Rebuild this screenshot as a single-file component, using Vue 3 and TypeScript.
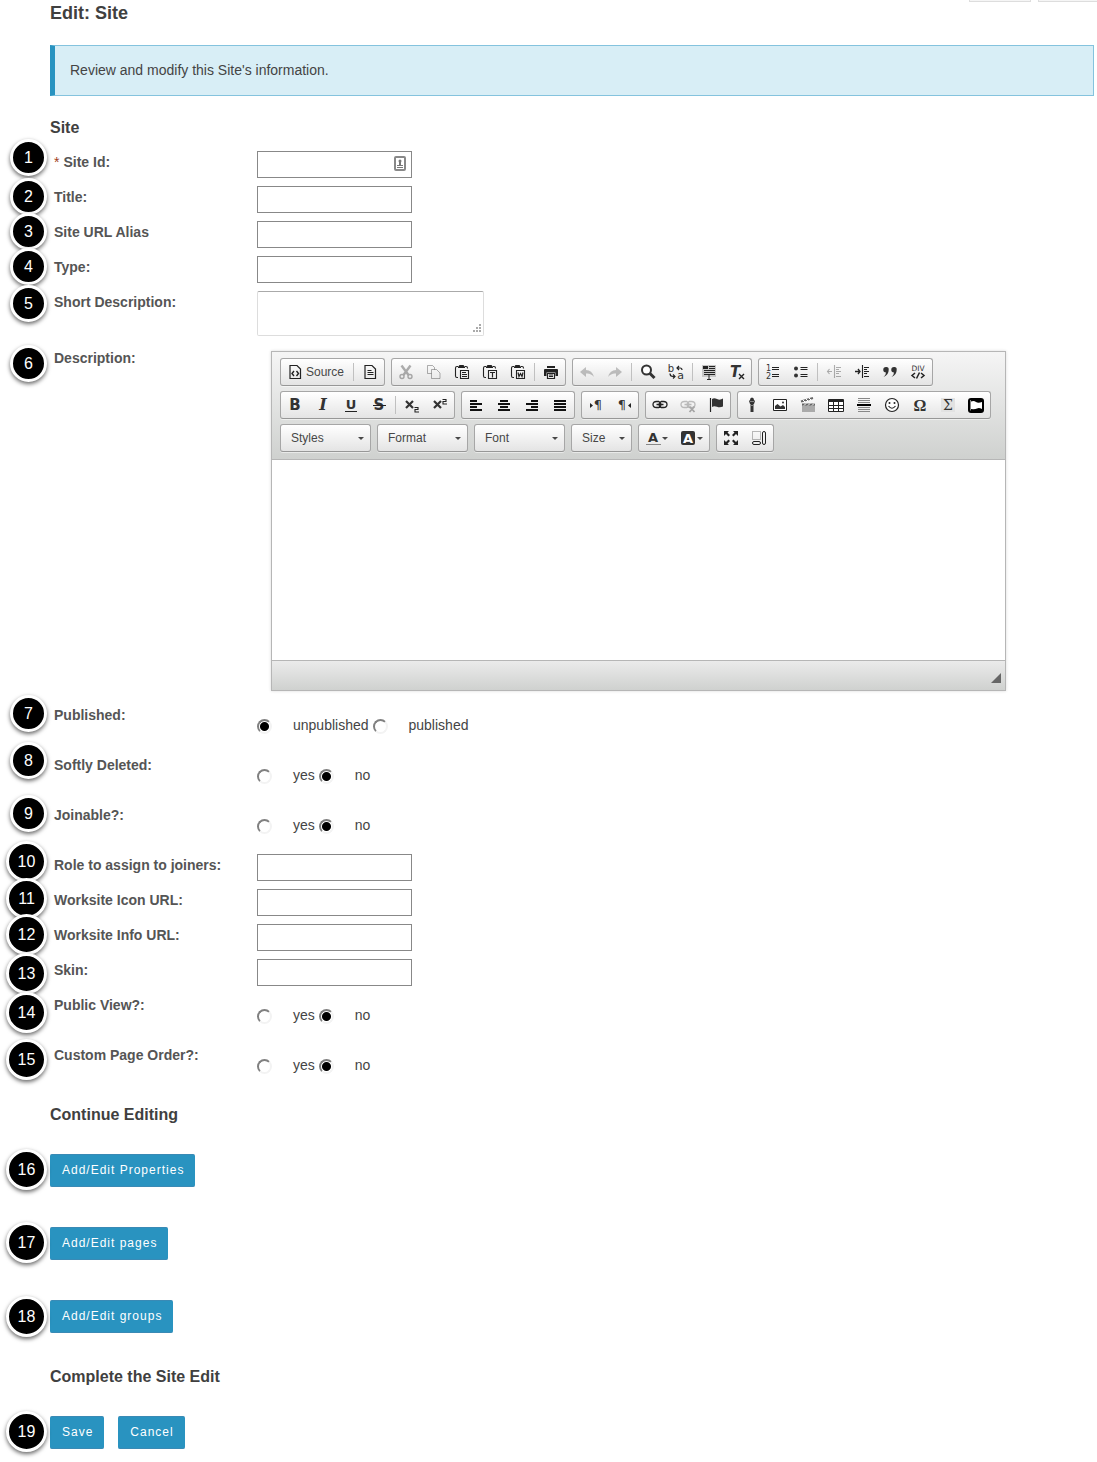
<script setup lang="ts">
import { reactive, ref } from 'vue'

type Field =
  | { kind: 'text'; id: string; label: string; required?: boolean }
  | { kind: 'area'; id: string; label: string }
  | { kind: 'editor'; id: string; label: string }
  | { kind: 'radio'; id: string; label: string; options: string[] }

const fields: Field[] = [
  { kind: 'text', id: 'site-id', label: 'Site Id:', required: true },
  { kind: 'text', id: 'title', label: 'Title:' },
  { kind: 'text', id: 'alias', label: 'Site URL Alias' },
  { kind: 'text', id: 'type', label: 'Type:' },
  { kind: 'area', id: 'short-description', label: 'Short Description:' },
  { kind: 'editor', id: 'description', label: 'Description:' },
  { kind: 'radio', id: 'published', label: 'Published:', options: ['unpublished', 'published'] },
  { kind: 'radio', id: 'softly-deleted', label: 'Softly Deleted:', options: ['yes', 'no'] },
  { kind: 'radio', id: 'joinable', label: 'Joinable?:', options: ['yes', 'no'] },
  { kind: 'text', id: 'joiner-role', label: 'Role to assign to joiners:' },
  { kind: 'text', id: 'icon-url', label: 'Worksite Icon URL:' },
  { kind: 'text', id: 'info-url', label: 'Worksite Info URL:' },
  { kind: 'text', id: 'skin', label: 'Skin:' },
  { kind: 'radio', id: 'public-view', label: 'Public View?:', options: ['yes', 'no'] },
  { kind: 'radio', id: 'page-order', label: 'Custom Page Order?:', options: ['yes', 'no'] },
]

const values = reactive<Record<string, string>>({
  published: 'unpublished',
  'softly-deleted': 'no',
  joinable: 'no',
  'public-view': 'no',
  'page-order': 'no',
})
const description = ref('')

// Vertical place of each numbered callout, in order
const pins: number[] = [
  139, 178, 213, 248, 285, 345, 695, 742, 795, 841, 878, 914, 953, 992, 1039, 1149, 1222, 1296, 1411,
]

interface Tool {
  icon?: string
  name?: string
  label?: string
  off?: boolean
  sep?: boolean
  menu?: boolean
  combo?: string
  narrow?: boolean
}
const sep: Tool = { sep: true }
const t = (icon: string, name: string, off = false): Tool => ({ icon, name, off })

const toolbar: Tool[][][] = [
  [
    [{ icon: 'source', name: 'Source', label: 'Source' }, sep, t('page', 'New Page')],
    [t('cut', 'Cut', true), t('copy', 'Copy', true), t('paste', 'Paste'), t('pasteText', 'Paste as plain text'), t('pasteWord', 'Paste from Word'), sep, t('print', 'Print')],
    [t('undo', 'Undo', true), t('redo', 'Redo', true), sep, t('find', 'Find'), t('replace', 'Replace'), sep, t('selectAll', 'Select All'), t('clear', 'Remove Format')],
    [t('numbers', 'Numbered List'), t('bullets', 'Bulleted List'), sep, t('outdent', 'Decrease Indent', true), t('indent', 'Increase Indent'), t('quote', 'Block Quote'), t('div', 'Create Div')],
  ],
  [
    [t('bold', 'Bold'), t('italic', 'Italic'), t('underline', 'Underline'), t('strike', 'Strike Through'), sep, t('sub', 'Subscript'), t('sup', 'Superscript')],
    [t('left', 'Align Left'), t('center', 'Center'), t('right', 'Align Right'), t('justify', 'Justify')],
    [t('ltr', 'Left to right'), t('rtl', 'Right to left')],
    [t('link', 'Link'), t('unlink', 'Unlink', true), t('flag', 'Anchor')],
    [t('mic', 'Record Audio'), t('image', 'Image'), t('movie', 'Movie'), t('table', 'Table'), t('rule', 'Horizontal Line'), t('smile', 'Smiley'), t('omega', 'Special Character'), t('sigma', 'Formula'), t('frame', 'Embed')],
  ],
  [
    [{ combo: 'Styles' }],
    [{ combo: 'Format' }],
    [{ combo: 'Font' }],
    [{ combo: 'Size', narrow: true }],
    [{ icon: 'color', name: 'Text Color', menu: true }, { icon: 'bgcolor', name: 'Background Color', menu: true }],
    [t('maximize', 'Maximize'), t('blocks', 'Show Blocks')],
  ],
]

const line = (d: string, w = 1, c = '#222') => `<path d="${d}" fill="none" stroke="${c}" stroke-width="${w}"/>`
const fill = (d: string, c = '#222') => `<path d="${d}" fill="${c}"/>`
const txt = (s: string, x: number, y: number, size: number, extra = '') =>
  `<text x="${x}" y="${y}" font-size="${size}" text-anchor="middle" font-family="DejaVu Sans, sans-serif" fill="#333" ${extra}>${s}</text>`

const sheet = line('M3 1.500h7l3.500 3.500v9.500h-10.500z', 1.2)
const clipboard =
  line('M4 2.500h-1q-1.500 0-1.500 1.500v8q0 1.500 1.500 1.500h1M11 2.500h1q1.500 0 1.500 1.500v.5', 1.1) +
  fill('M4 3l1.500-2h4L11 3v1H4z') +
  line('M6.500 6.500h8v8h-8z', 1.1)
const chain = (c: string) =>
  line('M7 4.500H4.500q-3.500 0-3.500 3t3.500 3H7M9 4.500h2.500q3.500 0 3.500 3t-3.500 3H9M4.500 7.500h7M7 4.500q2 1 2 3t-2 3M9 4.500q-2 1-2 3t2 3', 1.3, c)
const cross = (y: number) => line(`M2 ${y}l7 7M9 ${y}l-7 7`, 2.2, '#333')

const icons: Record<string, string> = {
  source: sheet + line('M7 7l-2 2.500 2 2.500M9.500 7l2 2.500-2 2.500', 1.4),
  page: sheet + line('M5.500 6.500h4M5.500 8.500h6M5.500 10.500h6', 1.2),
  cut: line('M3.500 1.500l7 9.500M12.500 1.500L5.500 11', 2.4) + line('M2 12.500a2 2 0 1 0 4 0a2 2 0 1 0-4 0M10 12.500a2 2 0 1 0 4 0a2 2 0 1 0-4 0', 1.4),
  copy: line('M5.500 9.500h-4v-8h5l2 2v2M5.500 5.500h5l3.500 3.500v5.500h-8.500z'),
  paste: clipboard + line('M8 8.500h4M8 10.500h5M8 12.500h5'),
  pasteText: clipboard + line('M8 8.500h5M10.500 8.500v5', 1.2),
  pasteWord: clipboard + line('M8 8.500l1 4 1.500-3 1.500 3 1-4', 1.2),
  print: fill('M4 2h8v2H4zM2 5h12q1 0 1 1v6h-2.500V8.500h-9V12H1V6q0-1 1-1z') + line('M4.500 9.500h7v5h-7z', 1.2) + line('M6 11h4M6 12.500h4'),
  undo: fill('M1 8l6-5v3q6 0 8 7q-3-4-8-3.500V13z', '#555'),
  redo: fill('M15 8L9 3v3Q3 6 1 13q3-4 8-3.500V13z', '#555'),
  find: '<circle cx="6.500" cy="6" r="4.500" fill="#fff" stroke="#333" stroke-width="2"/>' + line('M9.500 9l5 5', 3, '#333'),
  replace:
    txt('b', 3, 8, 10) + txt('a', 12.5, 15, 11) +
    line('M9 4h3q2 0 2 2M11 2l-2 2 2 2M2 9.500q0 3 3 3h2M5 10.500l2 2-2 2', 1.2),
  selectAll: fill('M1 1h14v12H1z', '#c6c6c6') + line('M3 3.500h3M8 2.500h6M8 4.500h6M3 6.500h11M3 8.500h11M3 10.500h11M6 15.500h4M8 11v4') + fill('M2 2h5v3H2z'),
  clear: txt('T', 6, 13, 15, 'font-weight="bold" font-style="italic"') + line('M10 10l5 5M15 10l-5 5', 1.4),
  numbers: txt('1', 3.5, 7, 8) + txt('2', 3.5, 15, 8) + line('M7 3.500h7M7 5.500h7M7 10.500h7M7 12.500h7', 1.2),
  bullets: '<circle cx="3" cy="4.500" r="2" fill="#333"/><circle cx="3" cy="11.500" r="2" fill="#333"/>' + line('M7.500 3.500h7M7.500 5.500h7M7.500 10.500h7M7.500 12.500h7', 1.2),
  outdent: line('M1 7.500h5M3.500 5l-2 2.500 2 2.500M8.500 1v13M10 3.500h5M10 5.500h3M10 7.500h5M10 9.500h3M10 12.500h5', 1.1),
  indent: line('M1 7.500h5M4 5l2 2.500-2 2.500', 1.3) + line('M8.500 1v13M10 3.500h5M10 5.500h3M10 7.500h5M10 9.500h3M10 12.500h5', 1.1),
  quote: fill('M4 3a2.500 2.500 0 0 1 2.700 2.700Q6.700 11 1.500 13q2.500-2 2.500-4.500A2.700 2.700 0 0 1 4 3zM12 3a2.500 2.500 0 0 1 2.700 2.700Q14.700 11 9.500 13q2.500-2 2.500-4.500a2.700 2.700 0 0 1 0-5.500z', '#333'),
  div: txt('DIV', 8, 7, 7.5) + line('M5 9l-3 2.500 3 2.500M11 9l3 2.500-3 2.500M9.500 8.500l-3 6', 1.5),
  bold: txt('B', 8, 13, 15, 'font-weight="bold"'),
  italic: '<text x="8" y="13" font-size="16" text-anchor="middle" font-family="DejaVu Serif, serif" font-weight="bold" font-style="italic" fill="#333">I</text>',
  underline: txt('U', 8, 12, 13, 'font-weight="bold"') + line('M2 14.500h12'),
  strike: txt('S', 8, 13, 15, 'font-weight="bold"') + line('M2 8.500h13'),
  sub: cross(4) + line('M10.500 10.500h3.500v2h-3v2.500h4', 1.1),
  sup: cross(4) + line('M10.500 2.500h3.500v2h-3v2.500h4', 1.1),
  left: line('M2 4h7M2 7h12M2 10h7M2 13h12', 2, '#111'),
  center: line('M4 4h8M2 7h12M4 10h8M2 13h12', 2, '#111'),
  right: line('M7 4h7M2 7h12M7 10h7M2 13h12', 2, '#111'),
  justify: line('M2 4h12M2 7h12M2 10h12M2 13h12', 2, '#111'),
  ltr: fill('M2 6l3 2.500L2 11z') + txt('¶', 10, 12, 13),
  rtl: fill('M15 6l-3 2.500 3 2.500z') + txt('¶', 6, 12, 13),
  link: chain('#222'),
  unlink: chain('#555') + line('M9.500 9.500l5 5.500M14.500 9.500l-5 5.500', 1.8),
  flag: line('M2.500 1v14', 1.2) + fill('M4 2q2-1.500 5 0t6-.5v8q-3 1.500-6 .3T4 10z', '#333'),
  mic: fill('M6 3q0-2.500 2-2.500t2 2.500l1 1-1 3H9.500v8h-3V7H6L5 4z', '#333') + line('M6 4.500h4M6.500 8.500h3', 1, '#888'),
  image: '<path d="M1.500 2.500h13v11h-13z" fill="#fff" stroke="#222"/>' + fill('M3 12V9l2.500-2 3 2.500L11 8l2 2v2z', '#333') + '<circle cx="11" cy="5.500" r="1" fill="#333"/>',
  movie: fill('M2 7h13v8H2z', '#aaa') + line('M1 4.500l12-3.500M2 7.500h13', 2, '#666') + line('M3 3l2 2M6 2l2 2M9 1l2 2M4 8.500l2-2M8 8.500l2-2M12 8.500l2-2', 1, '#fff'),
  table: '<path d="M.5 2.500h15v12H.5z" fill="#fff" stroke="#222"/>' + fill('M1 2h14v3H1z') + line('M1 8.500h14M1 11.500h14M5.500 5v9M10.500 5v9'),
  rule: line('M2 1.500h12M2 3.500h12M2 5.500h12M2 10.500h12M2 12.500h12M2 14.500h12', 1, '#888') + line('M1 8h14', 2, '#000'),
  smile: '<circle cx="8" cy="8" r="6.500" fill="#fff" stroke="#222" stroke-width="1.200"/><circle cx="5.500" cy="6" r="1" fill="#222"/><circle cx="10.500" cy="6" r="1" fill="#222"/>' + line('M4.500 9q3.500 4.500 7 0', 1.2),
  omega: '<text x="8" y="14" font-size="16" text-anchor="middle" font-family="Liberation Serif, serif" font-weight="bold" fill="#333">Ω</text>',
  sigma: fill('M1 1h14v14H1z', '#e2e2e2') + '<text x="8" y="13" font-size="14" text-anchor="middle" font-family="DejaVu Serif, serif" fill="#333">Σ</text>',
  frame: '<rect width="16" height="15" y="1" rx="3" fill="#000"/>' + fill('M3 4.500q3-1 5 .500t6 0V12q-3-1.500-5-.500T3 12z', '#fff') + line('M2.500 3v10.500', 1, '#888'),
  color: txt('A', 8, 12, 13, 'font-weight="bold"') + line('M1 14.500h15', 1, '#888'),
  bgcolor: '<rect x="1" y="1" width="14" height="14" rx="2" fill="#333"/><text x="8" y="13" font-size="13" font-weight="bold" text-anchor="middle" font-family="DejaVu Sans, sans-serif" fill="#fff">A</text>',
  maximize: fill('M1 1h5L4.500 2.500l2.500 2.500-1.500 1.500L3 4 1 6zM15 1h-5l1.500 1.500L9 5l1.500 1.500L13 4l2 2zM1 15h5l-1.500-1.500L7 11 5.500 9.500 3 12l-2-2zM15 15h-5l1.500-1.500L9 11l1.500-1.500L13 12l2-2z'),
  blocks: '<path d="M1.500 1.500h8v8h-8z" fill="none" stroke="#777" stroke-dasharray="1 1"/><rect x="1.500" y="11.500" width="8" height="3" rx="1.500" fill="none" stroke="#222"/><rect x="11.500" y="1.500" width="3" height="13" rx="1.500" fill="none" stroke="#222"/>',
}
</script>

<template>
  <main class="page">
    <div class="topbar"><span class="tab"></span><span class="tab"></span></div>
    <h1>Edit: Site</h1>
    <p class="notice">Review and modify this Site's information.</p>

    <form @submit.prevent>
      <h2 class="first">Site</h2>
      <div v-for="f in fields" :key="f.id" class="row" :class="f.kind">
        <span v-if="f.kind === 'radio'" :id="f.id + '-label'" class="name">{{ f.label }}</span>
        <label v-else :for="f.id" class="name"><span v-if="f.kind === 'text' && f.required" class="star">*</span>{{ f.label }}</label>

        <div v-if="f.kind === 'text'" class="field">
          <input :id="f.id" v-model="values[f.id]" type="text" class="textbox" />
          <svg v-if="f.required" class="card" viewBox="0 0 12 15" aria-hidden="true">
            <rect x="1" y="1" width="10" height="13" rx="1" fill="#fff" stroke="#888" stroke-width="2" />
            <circle cx="6" cy="5" r="1.500" fill="#777" />
            <path d="M5 6h2v3h2v1H3V9h2zM3 11h6v1H3z" fill="#777" />
          </svg>
        </div>

        <textarea v-else-if="f.kind === 'area'" :id="f.id" v-model="values[f.id]" class="short"></textarea>

        <div v-else-if="f.kind === 'editor'" class="editor">
          <div class="tools">
            <div v-for="(bar, i) in toolbar" :key="i" class="bar">
              <div v-for="(group, j) in bar" :key="j" class="group">
                <template v-for="(tool, k) in group" :key="k">
                  <span v-if="tool.sep" class="sep"></span>
                  <span v-else-if="tool.combo" class="combo" :class="{ narrow: tool.narrow }">
                    <select :aria-label="tool.combo"><option>{{ tool.combo }}</option></select>
                    <i class="arrow"></i>
                  </span>
                  <button v-else type="button" class="tool" :disabled="tool.off" :aria-label="tool.name">
                    <svg viewBox="0 0 16 16" aria-hidden="true" v-html="icons[tool.icon!]"></svg>
                    <span v-if="tool.label" class="caption">{{ tool.label }}</span>
                    <i v-if="tool.menu" class="arrow"></i>
                  </button>
                </template>
              </div>
            </div>
          </div>
          <textarea :id="f.id" v-model="description" class="content"></textarea>
          <div class="status">
            <svg viewBox="0 0 10 10" aria-hidden="true"><path d="M10 0v10H0z" fill="#666" /></svg>
          </div>
        </div>

        <div v-else class="choices" role="radiogroup" :aria-labelledby="f.id + '-label'">
          <label v-for="o in f.options" :key="o" class="choice">
            <input v-model="values[f.id]" type="radio" :name="f.id" :value="o" />{{ o }}
          </label>
        </div>
      </div>

      <h2 class="next">Continue Editing</h2>
      <div class="stack">
        <button type="button" class="action">Add/Edit Properties</button>
        <button type="button" class="action">Add/Edit pages</button>
        <button type="button" class="action">Add/Edit groups</button>
      </div>

      <h2 class="finish">Complete the Site Edit</h2>
      <div class="final">
        <button type="submit" class="action">Save</button>
        <button type="button" class="action">Cancel</button>
      </div>
    </form>

    <span v-for="(y, n) in pins" :key="n" class="pin" :class="{ wide: n > 8 }" :style="{ top: y + 'px' }">{{ n + 1 }}</span>
  </main>
</template>

<style>
body {
  margin: 0;
  background: #fff;
}
</style>

<style scoped>
* {
  box-sizing: border-box;
}
.page {
  position: relative;
  padding: 0 3px 13px 50px;
  font: 14px/17px "Liberation Sans", Arial, sans-serif;
  color: #444;
}
.topbar {
  display: flex;
  justify-content: flex-end;
  gap: 7px;
  height: 2px;
  margin-right: -3px;
}
.tab {
  width: 62px;
  background: #f5f5f5;
  border: 1px solid #ddd;
  border-top: 0;
}
.tab:last-child {
  width: 59px;
  border-right: 0;
}
h1,
h2 {
  margin: 0;
  line-height: 20px;
  color: #404040;
}
h1 {
  margin-top: 1px;
  font-size: 18px;
}
h2 {
  font-size: 16px;
}
.notice {
  margin: 22px 0;
  padding: 16px 15px;
  background: #d8eef6;
  border: 1px solid #84c3de;
  border-left: 5px solid #2993c0;
}
.first {
  margin-bottom: 13px;
}
.row {
  display: grid;
  grid-template-columns: 207px minmax(0, 1fr);
  align-items: start;
  min-height: 35px;
}
.row.area {
  min-height: 56px;
}
.row.editor {
  min-height: 0;
}
.row.radio {
  min-height: 50px;
}
.name {
  padding-left: 4px;
  line-height: 22px;
  font-weight: bold;
  color: #555;
}
.star {
  margin-right: 4px;
  font-weight: normal;
  color: #a04020;
}
.field {
  position: relative;
  width: 155px;
}
.textbox {
  display: block;
  width: 100%;
  height: 27px;
  padding: 2px 6px;
  border: 1px solid #888;
  border-radius: 0;
  background: #fff;
  font: inherit;
}
.card {
  position: absolute;
  top: 5px;
  right: 6px;
  width: 12px;
  height: 15px;
}
.short {
  display: block;
  width: 227px;
  height: 45px;
  border: 1px solid #ddd;
  border-top-color: #aaa;
  border-radius: 2px;
  font: inherit;
}
.short::-webkit-resizer {
  background:
    linear-gradient(#aaa, #aaa) 11px 4px / 2px 2px no-repeat,
    linear-gradient(#aaa, #aaa) 8px 7px / 2px 2px no-repeat,
    linear-gradient(#aaa, #aaa) 11px 7px / 2px 2px no-repeat,
    linear-gradient(#aaa, #aaa) 5px 10px / 2px 2px no-repeat,
    linear-gradient(#aaa, #aaa) 8px 10px / 2px 2px no-repeat,
    linear-gradient(#aaa, #aaa) 11px 10px / 2px 2px no-repeat;
}
div.editor:not(.row) {
  max-width: 735px;
  margin: 4px 0 13px 14px;
  border: 1px solid #b6b6b6;
  box-shadow: 0 0 3px rgba(0, 0, 0, 0.15);
}
.tools {
  display: flex;
  flex-direction: column;
  gap: 5px;
  padding: 6px 8px 7px;
  background: linear-gradient(#f5f5f5, #cfd1cf);
  border-bottom: 1px solid #b6b6b6;
}
.bar {
  display: flex;
  flex-wrap: wrap;
  gap: 5px 6px;
}
.group {
  display: flex;
  height: 28px;
  border: 1px solid #a6a6a6;
  border-bottom-color: #979797;
  border-radius: 3px;
  background: linear-gradient(#fff, #e4e4e4);
  box-shadow: 0 1px 0 rgba(255, 255, 255, 0.5);
}
.tool {
  display: flex;
  align-items: center;
  padding: 0 6px;
  border: 0;
  background: none;
  font: 12px/16px "Liberation Sans", Arial, sans-serif;
  color: #484848;
}
.tool svg {
  flex: none;
  width: 16px;
  height: 16px;
  overflow: visible;
}
.tool:disabled svg {
  opacity: 0.35;
}
.caption {
  padding: 0 1px 0 3px;
}
.sep {
  width: 1px;
  height: 18px;
  margin: 4px 2px;
  background: #c0c0c0;
}
.arrow {
  width: 0;
  height: 0;
  border: 3px solid transparent;
  border-top-color: #474747;
  border-bottom: 0;
}
.tool .arrow {
  margin: 1px 0 0 1px;
}
.combo {
  position: relative;
  width: 89px;
}
.combo.narrow {
  width: 59px;
}
.combo select {
  width: 100%;
  height: 26px;
  padding: 0 14px 0 10px;
  border: 0;
  background: none;
  appearance: none;
  font: 12px/26px "Liberation Sans", Arial, sans-serif;
  color: #474747;
}
.combo .arrow {
  position: absolute;
  top: 12px;
  right: 6px;
}
.content {
  display: block;
  width: 100%;
  height: 200px;
  padding: 20px;
  border: 0;
  resize: none;
  font: inherit;
}
.status {
  display: flex;
  justify-content: flex-end;
  align-items: flex-end;
  height: 30px;
  padding: 0 4px 7px;
  border-top: 1px solid #b6b6b6;
  background: linear-gradient(#ebebeb, #cfd1cf);
}
.status svg {
  width: 10px;
  height: 10px;
}
.choices {
  display: flex;
  gap: 4px;
  padding-top: 10px;
}
.choice {
  display: flex;
  align-items: center;
  gap: 21px;
  line-height: 22px;
}
.choice input {
  appearance: none;
  width: 15px;
  height: 15px;
  margin: 2px 0 0;
  border: 2px solid;
  border-color: #808080 #f3f3f3 #f3f3f3 #808080;
  border-radius: 50%;
  background: #fff;
}
.choice input:checked {
  background: radial-gradient(circle, #000 4px, #fff 5px);
}
.next {
  margin: 11px 0 29px;
}
.stack {
  display: flex;
  flex-direction: column;
  align-items: flex-start;
  gap: 40px;
}
.finish {
  margin: 34px 0 29px;
}
.final {
  display: flex;
  gap: 14px;
}
.action {
  height: 33px;
  padding: 0 11px 2px 12px;
  border: 1px solid #3a8ab5;
  border-width: 1px 0;
  border-radius: 2px;
  background: #2993c0;
  color: #fff;
  font: 12px/16px "Liberation Sans", Arial, sans-serif;
  letter-spacing: 1px;
}
.pin {
  position: absolute;
  left: 10px;
  display: flex;
  align-items: center;
  justify-content: center;
  width: 37px;
  height: 37px;
  border: 3px solid #fff;
  border-radius: 50%;
  background: #000;
  color: #fff;
  font-size: 16px;
  box-shadow: 0 2px 4px rgba(0, 0, 0, 0.6);
}
.pin.wide {
  left: 6px;
  width: 41px;
  height: 41px;
}
</style>
